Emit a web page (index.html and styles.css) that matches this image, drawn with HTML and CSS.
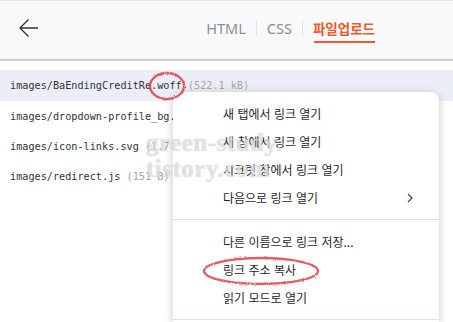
FILE: index.html
```html
<!DOCTYPE html>
<html lang="ko">
<head>
    <meta charset="UTF-8">
    <title>파일업로드</title>
    <link rel="stylesheet" href="styles.css">
</head>
<body>
    <header class="topbar">
        <button class="back" aria-label="뒤로">
            <svg width="22" height="22" viewBox="0 0 22 22">
                <path d="M20 11H2M10.5 2.5L2 11l8.5 8.5" fill="none" stroke="#333" stroke-width="1.3"/>
            </svg>
        </button>
        <nav class="tabs">
            <a class="tab">HTML</a>
            <span class="divider"></span>
            <a class="tab">CSS</a>
            <span class="divider"></span>
            <a class="tab active">파일업로드</a>
        </nav>
    </header>

    <ul class="files">
        <li class="file selected">images/BaEndingCreditRe.woff <span class="size">(522.1 kB)</span></li>
        <li class="file">images/dropdown-profile_bg.png <span class="size">(2.3 kB)</span></li>
        <li class="file">images/icon-links.svg <span class="size">(1.7 kB)</span></li>
        <li class="file">images/redirect.js <span class="size">(151 B)</span></li>
    </ul>

    <div class="context-menu">
        <div class="item">새 탭에서 링크 열기</div>
        <div class="item">새 창에서 링크 열기</div>
        <div class="item">시크릿 창에서 링크 열기</div>
        <div class="item">다음으로 링크 열기
            <svg class="chevron" width="8" height="10" viewBox="0 0 8 10">
                <path d="M2 1l4 4-4 4" fill="none" stroke="#444" stroke-width="1.2"/>
            </svg>
        </div>
        <div class="sep"></div>
        <div class="item">다른 이름으로 링크 저장...</div>
        <div class="item">링크 주소 복사</div>
        <div class="item">읽기 모드로 열기</div>
        <div class="sep"></div>
    </div>

    <div class="watermark">green-study.<br>tistory.com</div>

    <svg class="marks" width="453" height="322" viewBox="0 0 453 322">
        <defs>
            <filter id="crayon">
                <feTurbulence type="fractalNoise" baseFrequency="0.9" numOctaves="2" seed="3"/>
                <feDisplacementMap in="SourceGraphic" scale="2.5"/>
            </filter>
        </defs>
        <g fill="none" stroke="#e3323d" stroke-width="2.3" opacity="0.8" filter="url(#crayon)">
            <ellipse cx="167" cy="86" rx="17" ry="13"/>
            <ellipse cx="261" cy="271" rx="57" ry="13"/>
        </g>
    </svg>
</body>
</html>
```

FILE: styles.css
```css
:root {
    --accent: #ee5a2b;
    --tab-gray: #8a8f96;
    --menu-sep: #d6e3f7;
    --text: #333;
}

body {
    margin: 0;
    background: #fff;
    color: var(--text);
    font-family: 'Noto Sans', 'Noto Sans CJK KR', sans-serif;
    overflow: hidden;
}

.topbar {
    height: 58px;
    background: #f8f9fb;
    border-top: 1px solid #e4e6ea;
    border-bottom: 2px solid #c8cfd9;
    display: flex;
    align-items: center;
    justify-content: space-between;
    padding: 0 78px 0 18px;
}

.back {
    border: none;
    background: none;
    padding: 0;
    margin-top: -5px;
    display: flex;
}

.tabs {
    display: flex;
    align-items: center;
    gap: 10px;
    margin-top: -4px;
}

.tab {
    font-size: 14.5px;
    font-weight: 400;
    color: var(--tab-gray);
    line-height: 20px;
}

.tab.active {
    color: var(--accent);
    font-family: 'Noto Sans CJK KR', sans-serif;
    font-weight: 700;
    font-size: 13.5px;
    position: relative;
}

.tab.active::after {
    content: '';
    position: absolute;
    left: 1px;
    right: 0;
    bottom: -5px;
    height: 2px;
    background: var(--accent);
}

.divider {
    width: 1px;
    height: 15px;
    background: #e1e3e7;
}

.files {
    list-style: none;
    margin: 9px 0 0;
    padding: 0;
}

.file {
    height: 30px;
    line-height: 31px;
    padding-left: 10px;
    font-family: 'DejaVu Sans Mono', monospace;
    font-size: 10.2px;
    color: #333;
    white-space: nowrap;
}

.file.selected {
    background: #ebeef7;
    height: 31px;
}

.size {
    color: #a2a6ab;
}

.context-menu {
    position: absolute;
    left: 173px;
    top: 92px;
    width: 266px;
    height: 230px;
    box-sizing: border-box;
    overflow: hidden;
    background: #fff;
    border-radius: 8px 8px 0 0;
    box-shadow: 0 2px 10px rgba(0, 0, 0, 0.22);
    padding-top: 8px;
    font-family: 'Noto Sans CJK KR', sans-serif;
    font-size: 12px;
    color: #1f1f1f;
}

.item {
    height: 28px;
    line-height: 28px;
    padding-left: 50px;
    display: flex;
    align-items: center;
    position: relative;
}

.chevron {
    position: absolute;
    right: 25px;
    top: 9px;
}

.sep {
    height: 1px;
    background: var(--menu-sep);
    margin: 7px 0 8px;
}

.watermark {
    position: absolute;
    left: 146px;
    top: 130px;
    font-family: 'Liberation Serif', serif;
    font-weight: 700;
    font-size: 25px;
    line-height: 26px;
    letter-spacing: 0.5px;
    color: rgba(255, 255, 255, 0.6);
    text-shadow: 0 0 1px rgba(110, 110, 110, 0.5);
    pointer-events: none;
}

.marks {
    position: absolute;
    left: 0;
    top: 0;
    pointer-events: none;
}
```
